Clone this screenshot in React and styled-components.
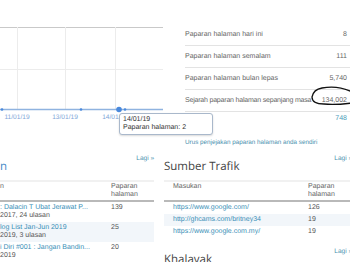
import React from "react";
import styled, { createGlobalStyle } from "styled-components";

const GlobalStyle = createGlobalStyle`
  body {
    margin: 0;
    background: #fff;
    font-family: "Liberation Sans", Arial, sans-serif;
    text-rendering: geometricPrecision;
  }
`;

const Page = styled.div`
  position: relative;
  width: 350px;
  height: 262px;
  overflow: hidden;
  background: #fff;
`;

const TopRow = styled.div`
  position: relative;
  display: flex;
  height: 145px;
`;

const ChartBox = styled.div`
  width: 165px;
  flex-shrink: 0;
`;

const Tooltip = styled.div`
  position: absolute;
  left: 119px;
  top: 113px;
  width: 87px;
  padding: 2px 2px 2px 3px;
  background: #fff;
  border: 1px solid #a9b8cb;
  border-radius: 3px;
  box-shadow: 0 1px 2px rgba(0, 0, 0, 0.15);
  font-size: 7px;
  line-height: 8px;
  color: #333;
`;

const Stats = styled.div`
  margin-left: 20px;
  flex: 1;
  min-width: 0;
`;

const TopNum = styled.div`
  height: 30px;
  margin-top: -6px;
  padding-right: 2px;
  text-align: right;
  font-size: 7px;
  line-height: 10px;
  color: #777;
`;

const StatRow = styled.div`
  display: flex;
  justify-content: space-between;
  align-items: center;
  gap: 2px;
  height: 21px;
  padding-right: 3px;
  border-bottom: 1px solid #e3e3e3;
  font-size: 7px;
  color: #666;
  white-space: nowrap;
`;

const StatLabel = styled.span`
  letter-spacing: ${(p) => (p.$tight ? "-0.2px" : "0")};
`;

const TotalRow = styled.div`
  height: 14px;
  padding-right: 3px;
  line-height: 14px;
  text-align: right;
  font-size: 7px;
  color: #4a9bb8;
`;

const Manage = styled.div`
  margin-top: 13px;
  font-size: 6.3px;
  line-height: 8px;
  color: #4a8fae;
  white-space: nowrap;
`;

const BottomRow = styled.div`
  display: flex;
  gap: 10px;
`;

const Column = styled.div`
  width: ${(p) => p.$w}px;
  flex-shrink: 0;
`;

const Head = styled.div`
  display: flex;
  justify-content: space-between;
  align-items: flex-start;
  height: 35px;
`;

const Title = styled.div`
  padding-top: 15px;
  font-family: "Open Sans", "Liberation Sans", sans-serif;
  font-size: 11.5px;
  line-height: 14px;
  color: ${(p) => (p.$link ? "#3d87c6" : "#444")};
  white-space: nowrap;
`;

const More = styled.div`
  padding-top: 10px;
  font-size: 6.5px;
  line-height: 8px;
  color: #4a8fae;
  white-space: nowrap;
`;

const Table = styled.div`
  border-top: 2px solid #f1f1f1;
`;

const Row = styled.div`
  display: grid;
  grid-template-columns: ${(p) => p.$cols};
  height: ${(p) => p.$h}px;
  padding-top: ${(p) => p.$pt || 0}px;
  box-sizing: border-box;
  background: ${(p) => (p.$alt ? "#f2f6fa" : "transparent")};
  font-size: 7px;
  line-height: 8px;
  color: #555;
`;

const HeadRow = styled(Row)`
  border-bottom: 2px solid #b9b9b9;
  color: #666;
`;

const Cell = styled.div`
  padding-left: ${(p) => p.$pl || 0}px;
  white-space: nowrap;
  overflow: hidden;
`;

const Link = styled.div`
  color: #3a8fb7;
`;

const Sub = styled.div`
  color: #555;
`;

const Scribble = styled.svg`
  position: absolute;
  left: 300px;
  top: 83px;
`;

const Chart = () => (
  <svg width="165" height="124" viewBox="0 0 165 124">
    <line x1="0" y1="27.5" x2="163" y2="27.5" stroke="#c9c9c9" />
    <line x1="0" y1="69.5" x2="163" y2="69.5" stroke="#ececec" />
    {[17.5, 65.5, 115.5].map((x) => (
      <line key={x} x1={x} y1="27" x2={x} y2="109" stroke="#ececec" />
    ))}
    <line x1="0" y1="109.5" x2="163" y2="109.5" stroke="#8fb3e0" strokeWidth="1.4" />
    {[2, 81, 125].map((x) => (
      <circle key={x} cx={x} cy="109.5" r="1.3" fill="#4a89dc" />
    ))}
    <circle cx="119" cy="109.5" r="2.8" fill="#4a89dc" />
    {[
      [17, "11/01/19"],
      [65, "13/01/19"],
      [115, "14/01/19"],
    ].map(([x, t]) => (
      <text
        key={t}
        x={x}
        y="118.5"
        textAnchor="middle"
        fontSize="6.6"
        fill="#7ea6d8"
        fontFamily="Liberation Sans, Arial, sans-serif"
      >
        {t}
      </text>
    ))}
  </svg>
);

const posts = [
  [": Dalacin T Ubat Jerawat P...", "2017, 24 ulasan", "139"],
  ["log List Jan-Jun 2019", "2019, 3 ulasan", "25"],
  ["i Diri #001 : Jangan Bandin...", "2019", "20"],
];

const sources = [
  ["https://www.google.com/", "126"],
  ["http://ghcams.com/britney34", "19"],
  ["https://www.google.com.my/", "19"],
];

const stats = [
  ["Paparan halaman hari ini", "8"],
  ["Paparan halaman semalam", "111"],
  ["Paparan halaman bulan lepas", "5,740"],
  ["Sejarah paparan halaman sepanjang masa", "134,002", true],
];

export default function App() {
  return (
    <>
      <GlobalStyle />
      <Page>
        <TopRow>
          <ChartBox>
            <Chart />
          </ChartBox>
          <Stats>
            <TopNum>546</TopNum>
            {stats.map(([label, value, tight]) => (
              <StatRow key={label}>
                <StatLabel $tight={tight}>{label}</StatLabel>
                <span>{value}</span>
              </StatRow>
            ))}
            <TotalRow>748</TotalRow>
            <Manage>Urus penjejakan paparan halaman anda sendiri</Manage>
          </Stats>
          <Tooltip>
            <div>14/01/19</div>
            <div>Paparan halaman: 2</div>
          </Tooltip>
        </TopRow>

        <BottomRow>
          <Column $w={154}>
            <Head>
              <Title $link>n</Title>
              <More>Lagi »</More>
            </Head>
            <Table>
              <HeadRow $cols="111px 1fr" $h={20} $pt={1}>
                <Cell>n</Cell>
                <Cell>
                  Paparan
                  <br />
                  halaman
                </Cell>
              </HeadRow>
              {posts.map(([title, sub, n], i) => (
                <Row key={title} $cols="111px 1fr" $h={20} $pt={2} $alt={i === 1}>
                  <Cell>
                    <Link>{title}</Link>
                    <Sub>{sub}</Sub>
                  </Cell>
                  <Cell>{n}</Cell>
                </Row>
              ))}
            </Table>
          </Column>

          <Column $w={188}>
            <Head>
              <Title>Sumber Trafik</Title>
              <More>Lagi »</More>
            </Head>
            <Table>
              <HeadRow $cols="144px 1fr" $h={20} $pt={1}>
                <Cell $pl={9}>Masukan</Cell>
                <Cell>
                  Paparan
                  <br />
                  halaman
                </Cell>
              </HeadRow>
              {sources.map(([url, n], i) => (
                <Row key={url} $cols="144px 1fr" $h={12} $pt={2} $alt={i === 1}>
                  <Cell $pl={9}>
                    <Link>{url}</Link>
                  </Cell>
                  <Cell>{n}</Cell>
                </Row>
              ))}
            </Table>
            <Head>
              <Title>Khalayak</Title>
              <More>Lagi »</More>
            </Head>
          </Column>
        </BottomRow>

        <Scribble width="52" height="26" viewBox="0 0 52 26">
          <path
            d="M52 9 C44 5, 33 3, 22 5 C16 6, 13 9, 12 14 C12 19, 16 21, 24 21 C33 22, 44 21, 52 20"
            fill="none"
            stroke="#111"
            strokeWidth="1.3"
            strokeLinecap="round"
          />
        </Scribble>
      </Page>
    </>
  );
}
